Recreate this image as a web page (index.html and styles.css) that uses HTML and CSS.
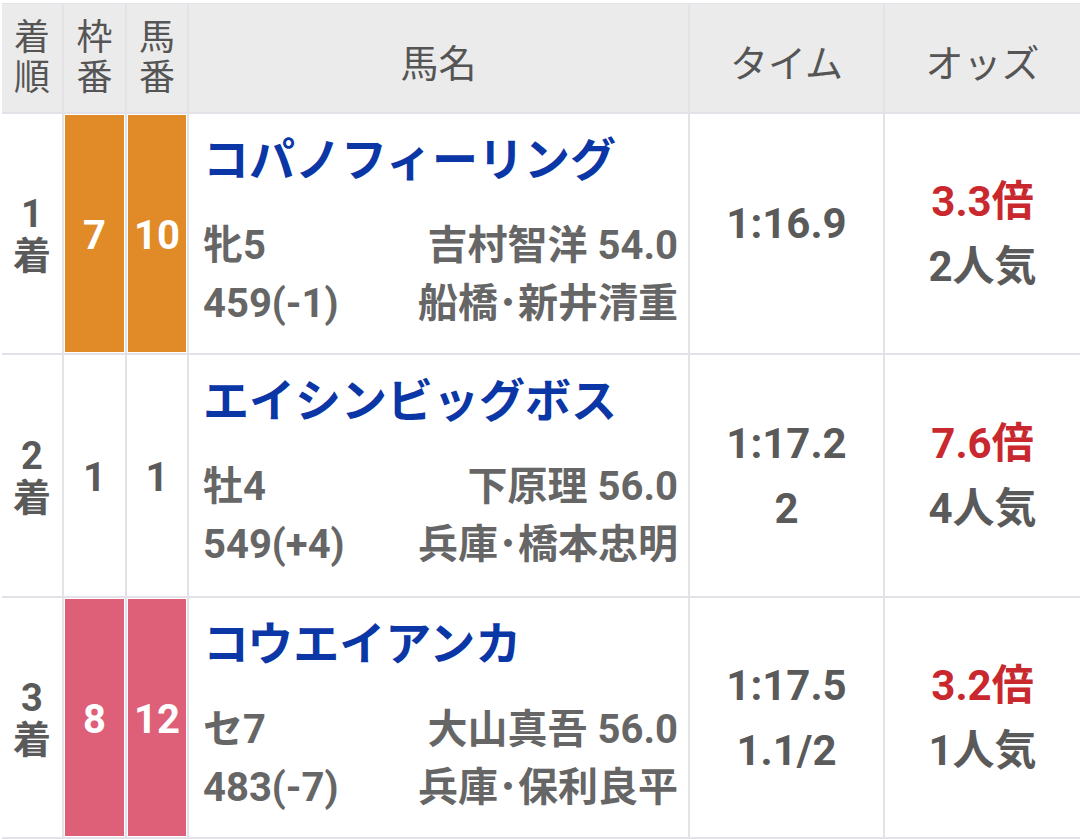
FILE: index.html
```html
<!DOCTYPE html>
<html lang="ja">
<head>
<meta charset="utf-8">
<title>レース結果</title>
<link rel="stylesheet" href="styles.css">
</head>
<body>
<div class="result">
  <div class="hd stack">着<br>順</div>
  <div class="hd stack">枠<br>番</div>
  <div class="hd stack">馬<br>番</div>
  <div class="hd">馬名</div>
  <div class="hd">タイム</div>
  <div class="hd">オッズ</div>

  <div class="rank">1<br>着</div>
  <div class="num waku-orange">7</div>
  <div class="num waku-orange">10</div>
  <div class="horse">
    <div class="name">コパノフィーリング</div>
    <div class="sub"><span>牝5</span><span>吉村智洋 54.0</span></div>
    <div class="sub"><span>459(-1)</span><span>船橋･新井清重</span></div>
  </div>
  <div class="time"><div class="t">1:16.9</div><div class="diff empty"></div></div>
  <div class="odds"><div class="o">3.3倍</div><div class="pop">2人気</div></div>

  <div class="rank">2<br>着</div>
  <div class="num">1</div>
  <div class="num">1</div>
  <div class="horse">
    <div class="name">エイシンビッグボス</div>
    <div class="sub"><span>牡4</span><span>下原理 56.0</span></div>
    <div class="sub"><span>549(+4)</span><span>兵庫･橋本忠明</span></div>
  </div>
  <div class="time"><div class="t">1:17.2</div><div class="diff">2</div></div>
  <div class="odds"><div class="o">7.6倍</div><div class="pop">4人気</div></div>

  <div class="rank">3<br>着</div>
  <div class="num waku-pink">8</div>
  <div class="num waku-pink">12</div>
  <div class="horse">
    <div class="name">コウエイアンカ</div>
    <div class="sub"><span>セ7</span><span>大山真吾 56.0</span></div>
    <div class="sub"><span>483(-7)</span><span>兵庫･保利良平</span></div>
  </div>
  <div class="time"><div class="t">1:17.5</div><div class="diff">1.1/2</div></div>
  <div class="odds"><div class="o">3.2倍</div><div class="pop">1人気</div></div>
</div>
</body>
</html>
```

FILE: styles.css
```css
html, body {
  margin: 0;
  padding: 0;
  background: #ffffff;
}
body {
  font-family: Roboto, "Noto Sans CJK JP", sans-serif;
  color: #5a5a5a;
}
.result {
  margin: 3px 0 0 2px;
  padding: 1px 0 2px 0;
  background: #e2e2e8;
  display: grid;
  grid-template-columns: 60px 61px 60px 499px 193px 1fr;
  grid-template-rows: 108px 239px 241px 239px;
  gap: 2px;
}
.result > div {
  background: #ffffff;
}
.hd {
  background: #ebebeb !important;
  display: flex;
  align-items: center;
  justify-content: center;
  text-align: center;
  font-size: 38px;
  color: #555555;
  font-weight: 400;
  padding-top: 4px;
  box-sizing: border-box;
}
.hd.stack {
  font-size: 36px;
  line-height: 40px;
  padding-top: 0;
}
.rank {
  display: flex;
  align-items: center;
  justify-content: center;
  text-align: center;
  font-size: 38px;
  line-height: 42px;
  font-weight: 700;
  color: #5a5a5a;
  padding-top: 2px;
  box-sizing: border-box;
}
.num {
  display: flex;
  align-items: center;
  justify-content: center;
  font-size: 40px;
  font-weight: 700;
  color: #5a5a5a;
  padding-top: 3px;
  box-sizing: border-box;
}
.waku-orange {
  background: #e08b28 !important;
  color: #ffffff;
  box-shadow: inset 0 0 0 1px #ffffff;
}
.waku-pink {
  background: #dd5f78 !important;
  color: #ffffff;
  box-shadow: inset 0 0 0 1px #ffffff;
}
.horse {
  padding: 12px 10px 0 14px;
  box-sizing: border-box;
}
.name {
  font-size: 46px;
  line-height: 69px;
  font-weight: 700;
  color: #0a36a6;
  margin-bottom: 22px;
  white-space: nowrap;
}
.sub {
  display: flex;
  justify-content: space-between;
  font-size: 40px;
  line-height: 58px;
  font-weight: 700;
  color: #666666;
  white-space: nowrap;
}
.time, .odds {
  display: flex;
  flex-direction: column;
  align-items: center;
  justify-content: center;
  gap: 2px;
  font-size: 42px;
  line-height: 1.5;
  font-weight: 700;
  color: #5a5a5a;
}
.diff.empty {
  height: 19px;
}
.o {
  color: #c8282e;
}
.pop {
  color: #5a5a5a;
}
```
